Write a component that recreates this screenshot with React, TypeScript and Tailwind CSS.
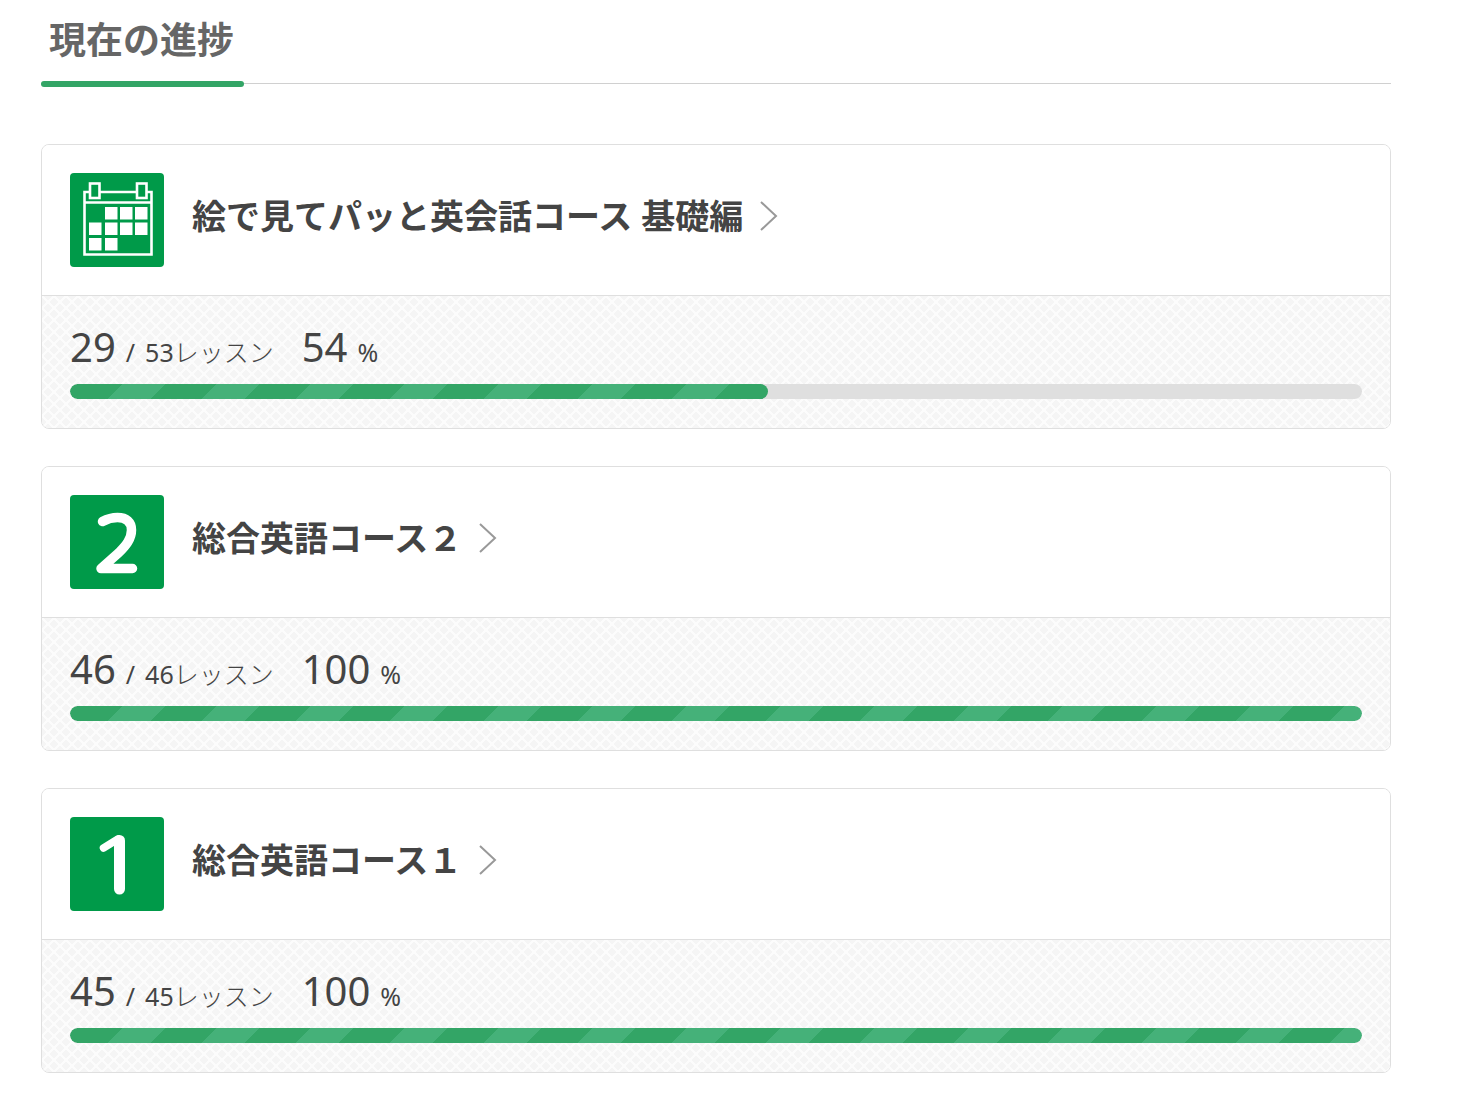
type Course = {
  title: string;
  icon: "calendar" | "two" | "one";
  done: number;
  total: number;
  percent: number;
};

const courses: Course[] = [
  { title: "絵で見てパッと英会話コース 基礎編", icon: "calendar", done: 29, total: 53, percent: 54 },
  { title: "総合英語コース２", icon: "two", done: 46, total: 46, percent: 100 },
  { title: "総合英語コース１", icon: "one", done: 45, total: 45, percent: 100 },
];

function CalendarIcon() {
  const cells = [
    [35, 34], [50, 34], [65, 34],
    [19, 49.5], [35, 49.5], [50, 49.5], [65, 49.5],
    [19, 65], [35, 65],
  ];
  return (
    <>
      <g fill="none" stroke="#fff" strokeWidth="2.6">
        <path d="M19 19H14.500V81.500H81.500V19H77M29.500 19H67M14.500 29.500H81.500" />
        <rect x="20" y="10.500" width="9.500" height="14.500" />
        <rect x="67" y="10.500" width="9.500" height="14.500" />
      </g>
      {cells.map(([x, y]) => (
        <rect key={`${x}-${y}`} x={x} y={y} width="12.5" height="12.5" fill="#fff" />
      ))}
    </>
  );
}

function CourseIcon({ icon }: { icon: Course["icon"] }) {
  return (
    <svg viewBox="0 0 94 94" className="size-[94px] shrink-0 rounded bg-[#009a49]" aria-hidden="true">
      {icon === "calendar" && <CalendarIcon />}
      {icon === "two" && (
        <path
          d="M32.500 26.500C38 23.500 43 22.500 47.500 22.500C56.500 22.500 61.500 27 61.500 35C61.500 44 56 50.500 49 57.500L31 73.500H62.500"
          fill="none" stroke="#fff" strokeWidth="9.500" strokeLinecap="round" strokeLinejoin="round"
        />
      )}
      {icon === "one" && (
        <>
          <path d="M49.500 23.500V72" fill="none" stroke="#fff" strokeWidth="11" strokeLinecap="round" />
          <path d="M33.500 31L48 22" fill="none" stroke="#fff" strokeWidth="7.500" strokeLinecap="round" />
        </>
      )}
    </svg>
  );
}

function CourseCard({ course }: { course: Course }) {
  return (
    <li className="overflow-hidden rounded-lg border border-[#dfdfdf]">
      <a href="#" className="flex gap-7 bg-white p-7">
        <CourseIcon icon={course.icon} />
        <h2 className="flex items-center gap-[17px] self-start pt-[19px] text-[34px] leading-[48px] font-bold">
          {course.title}
          <svg viewBox="0 0 18 32" className="h-8 w-[18px]" fill="none" stroke="#999" strokeWidth="2" aria-hidden="true">
            <path d="M1 2L16 16L1 30" />
          </svg>
        </h2>
      </a>
      <div className="border-t border-[#dfdfdf] bg-[#f5f5f5] bg-[linear-gradient(45deg,transparent_43%,#fcfcfc_43%_57%,transparent_57%),linear-gradient(135deg,transparent_43%,#fcfcfc_43%_57%,transparent_57%)] bg-size-[12px_12px] px-7 pt-[27px] pb-[29px]">
        <p className="flex items-baseline text-[25px] leading-[48px] font-light">
          <span className="text-[40px] font-normal">{course.done}</span>
          <span className="ml-[10px] font-normal">/</span>
          <span className="ml-[10px]">
            <span className="font-normal">{course.total}</span>レッスン
          </span>
          <span className="ml-7 text-[40px] font-normal">{course.percent}</span>
          <span className="ml-[10px] font-normal">%</span>
        </p>
        <div
          role="progressbar"
          aria-label={course.title}
          aria-valuenow={course.percent}
          aria-valuemin={0}
          aria-valuemax={100}
          className="mt-2 h-[15px] overflow-hidden rounded-full bg-[#dfdfdf]"
        >
          <div
            className="h-full rounded-full bg-[linear-gradient(135deg,#45b179_1%,#33a566_1%_28%,#45b179_28%_51%,#33a566_51%_78%,#45b179_78%)] bg-size-[94px_94px]"
            style={{ width: `${course.percent}%` }}
          />
        </div>
      </div>
    </li>
  );
}

export default function App() {
  return (
    <main className="bg-white pr-[73px] pb-8 pl-[41px] font-['Noto_Sans','Noto_Sans_CJK_JP',sans-serif] text-[#444]">
      <header className="flex border-b border-[#d0d0d0]">
        <h1 className="-mb-1 pt-3 text-[37px] leading-[56px] font-bold text-[#666] after:mt-[13px] after:block after:h-1.5 after:rounded-full after:bg-[#33a566]">
          <span className="block pr-[10px] pl-2">現在の進捗</span>
        </h1>
      </header>
      <ul className="mt-[60px] flex flex-col gap-[37px]">
        {courses.map((course) => (
          <CourseCard key={course.title} course={course} />
        ))}
      </ul>
    </main>
  );
}
